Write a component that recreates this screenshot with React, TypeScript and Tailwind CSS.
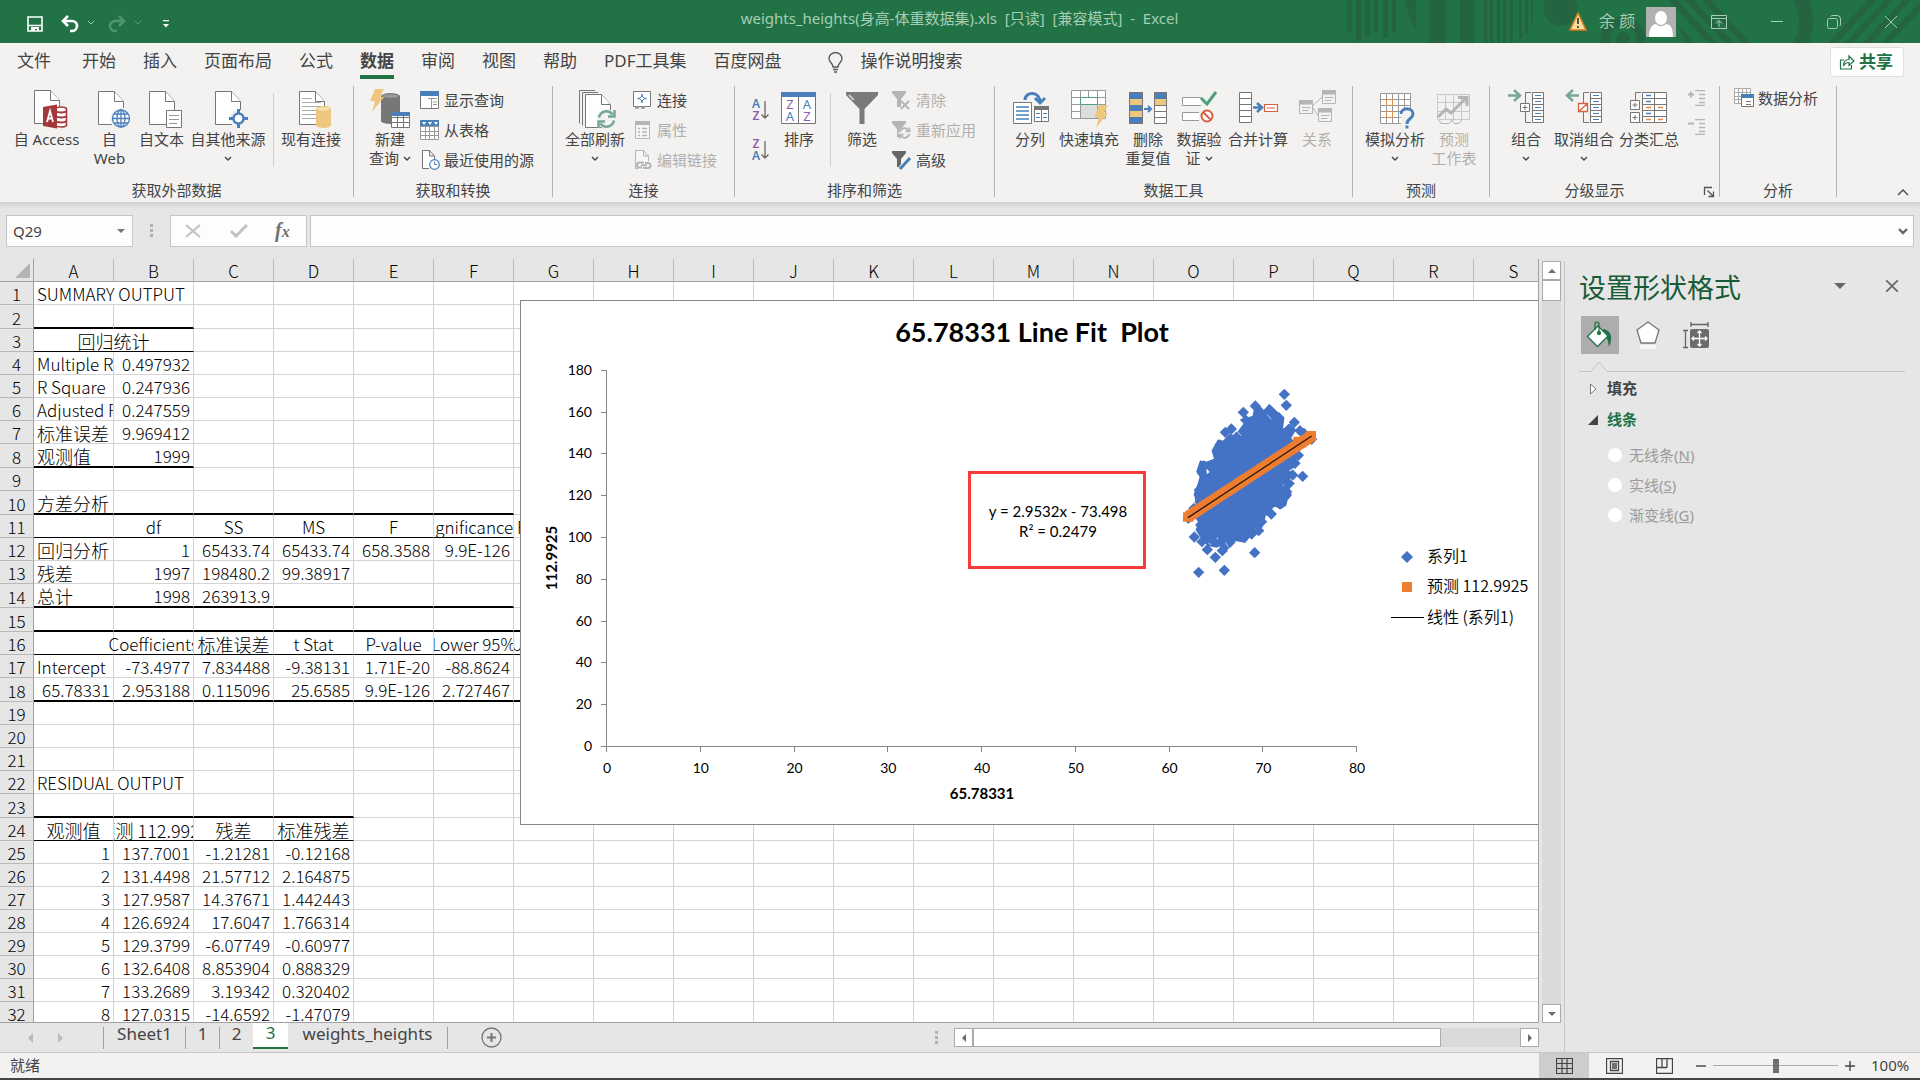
import React from "react";

const UI = "font-['Noto_Sans','Noto_Sans_CJK_SC',sans-serif]";
const GRAY = "#767676";
const BLUE = "#4a7fba";
const GOLD = "#edc77d";
const GREEN = "#77a897";
const RED = "#d9603f";
const PALE = "#b6b4b8";

type Kids = { children: React.ReactNode };

function Ico({ children }: Kids) {
  return (
    <svg className="h-10 w-10 shrink-0 overflow-visible" viewBox="0 0 40 40" fill="none" stroke={GRAY} aria-hidden="true">
      {children}
    </svg>
  );
}

function Small({ children }: Kids) {
  return (
    <svg className="h-5 w-5 shrink-0" viewBox="0 0 20 20" fill="none" stroke={GRAY} aria-hidden="true">
      {children}
    </svg>
  );
}

function Page({ x = 7.5, y = 2.5, h = 33 }: { x?: number; y?: number; h?: number }) {
  return (
    <g transform={`translate(${x} ${y})`}>
      <path d={`M0 0H16L25 10V${h}H0Z`} fill="#fff" />
      <path d="M16 0V10H25" fill="#fff" />
    </g>
  );
}

function Cells({ x, y, w, h, cols, rows, stroke = GRAY, fill = "#fff" }: { x: number; y: number; w: number; h: number; cols: number; rows: number; stroke?: string; fill?: string }) {
  let d = `M${x} ${y}h${w}v${h}h${-w}z`;
  for (let i = 1; i < cols; i++) d += `M${x + Math.round((w * i) / cols)} ${y}v${h}`;
  for (let i = 1; i < rows; i++) d += `M${x} ${y + Math.round((h * i) / rows)}h${w}`;
  return <path d={d} fill={fill} stroke={stroke} />;
}

function Drum({ x, y, w, h, fill, top }: { x: number; y: number; w: number; h: number; fill: string; top: string }) {
  return (
    <g stroke="none">
      <path d={`M${x} ${y + 3}v${h - 6}a${w / 2} 3 0 0 0 ${w} 0v${-(h - 6)}z`} fill={fill} />
      <ellipse cx={x + w / 2} cy={y + 3} rx={w / 2} ry="3" fill={fill} />
      <ellipse cx={x + w / 2} cy={y + 3} rx={w / 2 - 1.5} ry="1.8" fill={top} />
    </g>
  );
}

function Refresh({ cx, cy, r, color, w = 2.5 }: { cx: number; cy: number; r: number; color: string; w?: number }) {
  return (
    <g transform={`translate(${cx} ${cy}) scale(${r / 8})`} stroke={color} strokeWidth={(w * 8) / r}>
      <path d="M-7.5 -1.5A7.5 7.5 0 0 1 6 -4.5M8 -9V-2.5H1.5" />
      <path d="M7.5 1.5A7.5 7.5 0 0 1 -6 4.5M-8 9V2.5H-1.5" />
    </g>
  );
}

function Caret() {
  return (
    <svg className="inline-block h-2 w-2 shrink-0" viewBox="0 0 8 8" fill="none" stroke="#444" strokeWidth="1.4" aria-hidden="true">
      <path d="M1 2L4 5L7 2" />
    </svg>
  );
}

function Big({ w, icon, a, b, caret, off }: { w: string; icon: React.ReactNode; a: string; b?: string; caret?: boolean; off?: boolean }) {
  return (
    <button type="button" disabled={off} className={`flex shrink-0 flex-col items-center pt-[7px] text-[15px] leading-[19px] whitespace-nowrap ${w} ${off ? "text-[#b1afad]" : "text-[#444]"}`}>
      {icon}
      <span className="mt-px">{a}</span>
      <span className="flex h-[19px] items-center gap-1">
        {b}
        {caret && <Caret />}
      </span>
    </button>
  );
}

function Item({ icon, label, off }: { icon: React.ReactNode; label: string; off?: boolean }) {
  return (
    <button type="button" disabled={off} className={`flex h-[30px] items-center gap-1 text-[15px] whitespace-nowrap ${off ? "text-[#b1afad]" : "text-[#444]"}`}>
      {icon}
      {label}
    </button>
  );
}

function Group({ w, label, children, launcher }: { w: string; label: string; children: React.ReactNode; launcher?: boolean }) {
  return (
    <section aria-label={label} className={`flex shrink-0 ${w}`}>
      <div className="flex min-w-0 flex-1 flex-col">
        <div className="flex h-[98px]">{children}</div>
        <div className="flex h-5 items-center text-[15px] leading-5 text-[#444]">
          <span className="flex-1 text-center">{label}</span>
          {launcher && (
            <button type="button" aria-label="分级显示设置" className="mx-1 flex pt-1">
              <svg className="h-3 w-3" viewBox="0 0 12 12" fill="none" stroke="#555" strokeWidth="1.300">
                <path d="M1.500 9V1.500H9M4.500 4.500L10 10M10.500 5.500V10.500H5.500" />
              </svg>
            </button>
          )}
        </div>
      </div>
      <div className="mt-1 mb-[5px] w-px bg-[#b5b3b1]" />
    </section>
  );
}

const Thin = ({ m }: { m: string }) => <div className={`mt-[11px] mb-[13px] w-px shrink-0 bg-[#cfcdcb] ${m}`} />;

const Bolt = ({ x, y, s = 1 }: { x: number; y: number; s?: number }) => (
  <path transform={`translate(${x} ${y}) scale(${s})`} d="M5 0H14L10 8H14L2 23L5 12H0Z" fill={GOLD} stroke="none" />
);

const accessIcon = (
  <Ico>
    <Page y={1.5} />
    <path d="M28 19.500c3-2 10-2 11.500 0v17c-1.500 2-8.500 2-11.500 0z" fill="#fff" stroke="#a4373a" strokeWidth="1.500" />
    <path d="M28 22c3 2 10 2 11.500 0M28 27c3 2 10 2 11.500 0M28 32c3 2 10 2 11.500 0" stroke="#a4373a" strokeWidth="1.800" />
    <path d="M16 18L30 15.500V39.500L16 37Z" fill="#a4373a" stroke="none" />
    <path d="M20 33L23 22L26 33M21 29.500H25" stroke="#fff" strokeWidth="1.800" />
  </Ico>
);
const webIcon = (
  <Ico>
    <Page x={8.5} />
    <circle cx="31" cy="29.500" r="11" fill="#f3f2f1" stroke="none" />
    <g stroke={BLUE} strokeWidth="1.300">
      <circle cx="31" cy="29.500" r="8.500" fill="#fff" />
      <ellipse cx="31" cy="29.500" rx="4" ry="8.500" />
      <path d="M31 21V38M22.500 29.500H39.500M24 25H38M24 34H38" />
    </g>
  </Ico>
);
const textIcon = (
  <Ico>
    <Page />
    <path d="M24.500 21.500H39.500V38.500H24.500Z" fill="#fff" />
    <path d="M27 26.500H37M27 30.500H37M27 34.500H35" stroke="#999" />
  </Ico>
);
const otherIcon = (
  <Ico>
    <Page />
    <circle cx="30.500" cy="29.500" r="9" fill="#f3f2f1" stroke="none" />
    <circle cx="30.500" cy="29.500" r="5" fill="#fff" stroke={BLUE} strokeWidth="2.500" />
    <path d="M30.500 20V25M30.500 34V39M21 29.500H26M35 29.500H40" stroke={BLUE} strokeWidth="3" />
  </Ico>
);
const existingIcon = (
  <Ico>
    <Page x={8.5} />
    <path d="M11 9.500H21M11 13.500H30M11 17.500H30M11 21.500H25M11 25.500H25M11 29.500H25" stroke="#aaa" />
    <Drum x={25} y={17} w={15} h={22} fill={GOLD} top="#f6e0b3" />
  </Ico>
);
const newQueryIcon = (
  <Ico>
    <Drum x={11} y={4} w={19} h={31} fill="#777" top="#999" />
    <Bolt x={0} y={0} />
    <Cells x={21.5} y={23.5} w={18} h={15} cols={3} rows={3} />
    <path d="M21 23H40V27H21Z" fill={BLUE} stroke="none" />
  </Ico>
);
const refreshIcon = (
  <Ico>
    <path d="M4.500 34.500V1.500H20M7.500 36.500V3.500H23" />
    <Page x={10.5} y={5.5} h={33} />
    <circle cx="31.500" cy="30" r="10" fill="#f3f2f1" stroke="none" />
    <Refresh cx={31.5} cy={30} r={8} color={GREEN} />
  </Ico>
);
const sortIcon = (
  <Ico>
    <path d="M2.500 4.500H36.500V34.500H2.500ZM19.500 4V34" fill="#fff" />
    <path d="M2 3H37V8H2Z" fill={BLUE} stroke="none" />
    <g stroke="none" fontSize="13" textAnchor="middle" className="font-['Noto_Sans']">
      <text x="11" y="20" fill="#8f5bb0">Z</text>
      <text x="11" y="32" fill={BLUE}>A</text>
      <text x="28" y="20" fill={BLUE}>A</text>
      <text x="28" y="32" fill="#8f5bb0">Z</text>
    </g>
  </Ico>
);
const filterIcon = (
  <Ico>
    <path d="M4 3H36V6L22.500 20V35H17.500V20L4 6Z" fill="#7a7a7a" stroke="none" />
    <path d="M7 6L12 11" stroke="#ddd" strokeWidth="1.500" />
  </Ico>
);
const splitIcon = (
  <Ico>
    <path d="M3.500 13.500H21.500V34.500H3.500Z" fill="#fff" />
    <path d="M6 18H19M6 22H19M6 26H19M6 30H19" stroke={BLUE} strokeWidth="1.300" />
    <Cells x={24.5} y={17.5} w={14} h={15} cols={2} rows={1} />
    <path d="M24 17H39V21H24Z" fill={GRAY} stroke="none" />
    <path d="M26 24.500H30M33 24.500H37M26 28.500H30M33 28.500H37" stroke={BLUE} />
    <path d="M15 11C15 2 30 2 30 13M25 9L30 14L35 9" stroke={BLUE} strokeWidth="3" />
  </Ico>
);
const flashIcon = (
  <Ico>
    <Cells x={2.5} y={1.5} w={34} h={28} cols={4} rows={4} stroke="#999" />
    <path d="M12 16H28V29H12Z" fill="#ddd" stroke="none" />
    <path d="M11.500 8.500H28.500V15.500H11.500Z" fill="#fff" stroke="#4f9f7c" />
    <Bolt x={25} y={16} />
  </Ico>
);
const dupIcon = (
  <Ico>
    <path d="M1 3H15V35H1Z" fill={BLUE} stroke="none" />
    <path d="M1 10H15V16H1ZM1 22H15V28H1ZM26 10H39V16H26Z" fill={GOLD} stroke="none" />
    <path d="M26 3H39V10H26Z" fill={BLUE} stroke="none" />
    <path d="M26 17H39V35H26Z" fill="#fff" stroke="none" />
    <path d="M1.500 3.500H14.500V34.500H1.500ZM26.500 3.500H38.500V34.500H26.500ZM26 16.500H39M26 22.500H39M26 28.500H39" />
    <path d="M16 20H23M20 17L23 20L20 23" stroke={BLUE} strokeWidth="2" />
  </Ico>
);
const validIcon = (
  <Ico>
    <path d="M22 8.500H3.500V16.500H22M20 23.500H3.500V31.500H20" fill="#fff" stroke="#999" />
    <path d="M22 9L28 15L37 3" stroke="#4f9f7c" strokeWidth="3" />
    <circle cx="28" cy="27" r="5.500" stroke={RED} strokeWidth="2" fill="#fff" />
    <path d="M24 23L32 31" stroke={RED} strokeWidth="2" />
  </Ico>
);
const mergeIcon = (
  <Ico>
    <Cells x={1.5} y={3.5} w={12} h={30} cols={1} rows={5} />
    <path d="M15 18.500H23M19 14L24 18.500L19 23" stroke={BLUE} strokeWidth="2.500" />
    <path d="M26.500 15.500H39.500V22.500H26.500ZM29 19H37" stroke={RED} fill="#fff" strokeWidth="1.200" />
  </Ico>
);
const relIcon = (
  <Ico>
    <path d="M15 17.500L25 8M15 17.500L22 28" stroke={PALE} />
    {[[25.5, 1.5], [2.5, 11.5], [21.5, 19.5]].map(([x, y]) => (
      <g key={x} transform={`translate(${x} ${y})`} stroke={PALE}>
        <path d="M0 0H13V13H0Z" fill="#f3f2f1" />
        <path d="M0 0H13V3.500H0Z" fill={PALE} />
        <path d="M2.500 7H11M2.500 10H9" />
      </g>
    ))}
  </Ico>
);
const whatIfIcon = (
  <Ico>
    <Cells x={5.5} y={4.5} w={30} h={30} cols={5} rows={5} stroke="#999" />
    <path d="M11.500 10.500H17.500V16.500H11.500ZM11.500 22.500H17.500V28.500H11.500Z" fill="#fff" stroke="#e08a45" />
    <path d="M26 20H40V40H26Z" fill="#f3f2f1" stroke="none" />
    <path d="M26 25C26 18 38 18 38 25C38 30 32 29 32 35" stroke={BLUE} strokeWidth="3" />
    <path d="M30.500 36.500H33.500V39.500H30.500Z" fill={BLUE} stroke="none" />
  </Ico>
);
const forecastIcon = (
  <Ico>
    <Cells x={3.5} y={5.5} w={32} h={25} cols={4} rows={3} stroke="#c9c7ca" fill="#f3f2f1" />
    <path d="M5 31L7 34.500H15L18 31M18 31L20 34.500H25L28 31" stroke={PALE} />
    <path d="M4 28L12 20L17 24L32 9M24 8.500H33V17" stroke={PALE} strokeWidth="3" />
  </Ico>
);
const groupIcon = (
  <Ico>
    <path d="M2 6.500H13M8 1L14 6.500L8 12" stroke={GREEN} strokeWidth="2.500" />
    <path d="M25 3.500H19.500V14M19.500 23V33.500H25" />
    <Cells x={26.5} y={3.5} w={11} h={30} cols={1} rows={5} />
    <path d="M29 6.500H35M29 12.500H35M29 18.500H35M29 24.500H35M29 30.500H35" stroke={BLUE} />
    <path d="M14.500 14.500H23.500V22.500H14.500ZM16.500 18.500H21.500M19 16V21" fill="#fff" />
  </Ico>
);
const ungroupIcon = (
  <Ico>
    <path d="M15 6.500H4M9 1L3 6.500L9 12" stroke={GREEN} strokeWidth="2.500" />
    <path d="M25 3.500H19.500V14M19.500 23V33.500H25" />
    <Cells x={26.5} y={3.5} w={11} h={30} cols={1} rows={5} />
    <path d="M29 6.500H35M29 12.500H35M29 18.500H35M29 24.500H35M29 30.500H35" stroke={BLUE} />
    <path d="M14.500 14.500H23.500V22.500H14.500ZM15 22L23 15" fill="#fff" stroke={RED} strokeWidth="1.300" />
  </Ico>
);
const subtotalIcon = (
  <Ico>
    <path d="M12 3.500H6.500V11M12 33.500H6.500" />
    <Cells x={13.5} y={3.5} w={24} h={30} cols={2} rows={5} />
    <path d="M17 6.500H22M17 12.500H22M17 24.500H22" stroke={BLUE} strokeWidth="1.300" />
    <path d="M17 18.500H22M29 18.500H34M17 30.500H22M29 30.500H34" stroke="#e08a45" strokeWidth="1.300" />
    <path d="M1.500 11.500H10.500V20.500H1.500ZM3.500 16H8.500M6 13.500V18.500M1.500 23.500H10.500V33.500H1.500ZM3.500 28.500H8.500M6 26V31" fill="#fff" />
  </Ico>
);

const showQuery = (
  <Small>
    <path d="M.5 2.500H18.500V18.500H.5Z" fill="#fff" />
    <path d="M0 1H19V6H0Z" fill={BLUE} stroke="none" />
    <path d="M11.500 9V18M8 8.500H17M13 12H17M13 14.500H17" stroke="#999" />
  </Small>
);
const fromTable = (
  <Small>
    <Cells x={0.5} y={2.5} w={18} h={17} cols={4} rows={4} stroke="#999" />
    <path d="M0 0H19V6H0Z" fill={BLUE} stroke="none" />
    <path d="M2 2H6L4 5ZM8 2H12L10 5ZM14 2H18L16 5Z" fill="#fff" stroke="none" />
  </Small>
);
const recent = (
  <Small>
    <path d="M9 18.500H2.500V.5H9.500L14.500 6V9M9.500 .5V6H14.500" fill="#fff" />
    <circle cx="14.500" cy="14.500" r="4.800" fill="#fff" stroke={BLUE} strokeWidth="1.200" />
    <path d="M14.500 11.500V14.500H17" stroke={BLUE} />
  </Small>
);
const connIcon = (
  <Small>
    <path d="M.5 1.500H17.500V16.500H.5Z" fill="#fff" />
    <path d="M9 4V13M4.500 8.500H13.500" stroke={BLUE} strokeWidth="1.500" />
    <path d="M9 6L11.500 8.500L9 11L6.500 8.500Z" fill="#fff" stroke={BLUE} />
    <path d="M2 17.500H6M8 17.500H12" strokeWidth="2.500" stroke="#999" />
  </Small>
);
const propIcon = (
  <Small>
    <path d="M2.500 2.500H16.500V18.500H2.500Z" stroke={PALE} fill="#f7f6f8" />
    <path d="M2 1H17V5H2Z" fill={PALE} stroke="none" />
    <path d="M5 8.500H7M9 8.500H14M5 12H7M9 12H14M5 15.500H7M9 15.500H14" stroke={PALE} strokeWidth="1.300" />
  </Small>
);
const linkIcon = (
  <Small>
    <path d="M5 18.500H2.500V.5H10.500L15.500 6V11M10.500 .5V6H15.500" stroke={PALE} fill="#f7f6f8" />
    <path d="M9 17.500H6.500A2.500 2.500 0 0 1 6.500 12.500H11M12 13H15A2.500 2.500 0 0 1 15 18H10M8 15.300H14" stroke={PALE} strokeWidth="2" />
  </Small>
);
const smallFunnel = (c: string) => <path d="M0 1H14V3L9 9V17H5V9L0 3Z" fill={c} stroke="none" />;
const clearIcon = (
  <Small>
    {smallFunnel(PALE)}
    <path d="M9 11L17 19M17 11L9 19" stroke={PALE} strokeWidth="2" />
  </Small>
);
const reapplyIcon = (
  <Small>
    {smallFunnel(PALE)}
    <circle cx="12.500" cy="13" r="6" fill="#f3f2f1" stroke="none" />
    <Refresh cx={12.5} cy={13} r={5} color={PALE} w={1.8} />
  </Small>
);
const advIcon = (
  <Small>
    {smallFunnel("#666")}
    <path d="M18 8L9 18" stroke="#f3f2f1" strokeWidth="5" />
    <path d="M18 8L8 19" stroke={BLUE} strokeWidth="3" />
  </Small>
);
const analysisIcon = (
  <Small>
    <Cells x={0.5} y={0.5} w={16} h={15} cols={4} rows={4} stroke="#aaa" />
    <path d="M7.500 6.500H19.500V18.500H7.500Z" fill="#fff" />
    <path d="M7 6H20V10H7Z" fill={BLUE} stroke="none" />
    <path d="M12 13.500H17M12 16.500H17" />
  </Small>
);

function AzIcon({ top, bottom, ct, cb }: { top: string; bottom: string; ct: string; cb: string }) {
  return (
    <svg className="h-[22px] w-5 overflow-visible" viewBox="0 0 20 22" aria-hidden="true">
      <g fontSize="12" fontWeight="600" textAnchor="middle" className="font-['Noto_Sans']">
        <text x="5" y="9" fill={ct}>{top}</text>
        <text x="5" y="21" fill={cb}>{bottom}</text>
      </g>
      <path d="M14 2V19M10.500 15.500L14 19L17.500 15.500" fill="none" stroke="#666" strokeWidth="1.300" />
    </svg>
  );
}

function OutlineIcon({ plus }: { plus?: boolean }) {
  return (
    <svg className="h-4 w-5" viewBox="0 0 20 16" fill="none" stroke={PALE} aria-hidden="true">
      <path d="M8 .5H18M12 4.500H18M12 8.500H18M12 12.500H18M8 15.500H18" strokeWidth="1.300" />
      <path d={plus ? "M1 4.500H7M4 1.500V7.500" : "M1 4.500H7"} strokeWidth="2" />
    </svg>
  );
}

function TitleBar() {
  return (
    <header className="relative flex h-[43px] shrink-0 items-center bg-[#217346] text-[#a6cdb5]">
      <svg className="absolute top-0 right-0 h-[43px] w-[580px]" viewBox="0 0 580 43" aria-hidden="true">
        <g fill="#256440">
          <path d="M7 0h5v32h-5zM16 0h5v41h-5zM25 0h5v36h-5zM34 0h4v32h-4zM43 0h5v38h-5zM52 0h4v32h-4zM65 0h11v30q-8-12-11-30zM89 0h17v43h-17zM120 0h14v43h-14z" />
          <path d="M144 0h3v43h-3zM150 0h3v43h-3zM157 0h3v43h-3zM163 0h3v43h-3zM170 0h3v43h-3zM179 0h3v39h-3zM185 0h3v34h-3zM191 0h2v23h-2z" />
          <path d="M206 0h29a17 17 0 1 1-29 0z" />
          <path d="M453 0h16q8 22 0 43h-16q12-22 0-43zM488 43L528 0h9L497 43zM505 43L545 0h8L513 43zM523 43L563 0h8L531 43zM541 43L580 2V11L549 43zM328 0h9l40 43h-9zM345 0h9l40 43h-9zM362 0h9l40 43h-9zM337 24l18 19h-9z" />
        </g>
        <circle cx="283" cy="39" r="18" fill="none" stroke="#256440" strokeWidth="9" />
        <circle cx="283" cy="39" r="7" fill="#256440" />
      </svg>
      <div className="flex w-[200px] items-center pl-[27px]">
        <button type="button" aria-label="保存" className="mt-1">
          <svg className="h-4 w-4" viewBox="0 0 16 16" fill="none" stroke="#fff" strokeWidth="1.600">
            <path d="M1 1H15V15H1ZM1 9.500H15" />
            <path d="M4 11H12V15H10V13H8V15H4Z" fill="#fff" stroke="none" />
          </svg>
        </button>
        <button type="button" aria-label="撤消" className="mt-1 ml-[18px] flex items-center gap-2">
          <svg className="h-[18px] w-[18px]" viewBox="0 0 18 18" fill="none" stroke="#fff" strokeWidth="2.600">
            <path d="M7 1L2 6L7 11M2.500 6H11A5 5 0 0 1 11 16H9" />
          </svg>
          <svg className="h-2 w-2" viewBox="0 0 8 8" fill="none" stroke="#a6cdb5"><path d="M1 1L4 4L7 1" /></svg>
        </button>
        <button type="button" aria-label="恢复" className="mt-1 ml-[13px] flex items-center gap-2">
          <svg className="h-[18px] w-[18px]" viewBox="0 0 18 18" fill="none" stroke="#4f9470" strokeWidth="2.600">
            <path d="M11 1L16 6L11 11M15.500 6H7A5 5 0 0 0 7 16H9" />
          </svg>
          <svg className="h-2 w-2" viewBox="0 0 8 8" fill="none" stroke="#5f9f7d"><path d="M1 1L4 4L7 1" /></svg>
        </button>
        <button type="button" aria-label="自定义快速访问工具栏" className="mt-1 ml-5">
          <svg className="h-2 w-2" viewBox="0 0 8 8"><path d="M1 0H7V1.200H1ZM1 4H7L4 7.500Z" fill="#fff" /></svg>
        </button>
      </div>
      <h1 className="flex-1 pb-[6px] pl-[150px] text-center text-[15px] whitespace-pre">weights_heights(身高-体重数据集).xls  [只读]  [兼容模式]  -  Excel</h1>
      <div className="relative flex w-[351px] items-center">
        <svg className="h-[19px] w-[18px]" viewBox="0 0 18 19"><path d="M9 1L17 18H1Z" fill="#f7dc9b" stroke="#d97a1e" strokeWidth="1.500" /><path d="M9 6V12M9 14V16" stroke="#444" strokeWidth="1.800" /></svg>
        <span className="ml-3 w-[47px] pb-px text-[16px] leading-5 whitespace-nowrap">余 颜</span>
        <svg className="h-[30px] w-[30px] bg-[#b1b1b1]" viewBox="0 0 30 30"><ellipse cx="15" cy="11" rx="6" ry="7" fill="#fff" /><path d="M3 30C3 20 7 17 10 17C13 20 17 20 20 17C24 17 27 20 27 30Z" fill="#fff" /></svg>
        <button type="button" aria-label="功能区显示选项" className="ml-[35px]">
          <svg className="h-4 w-4" viewBox="0 0 16 16" fill="none" stroke="currentColor"><path d="M.5 1.500H15.500V14.500H.5ZM.5 4.500H15.500M8 13V6.500M5 9.500L8 6.500L11 9.500" /></svg>
        </button>
        <button type="button" aria-label="最小化" className="ml-11">
          <svg className="h-4 w-3" viewBox="0 0 12 16" stroke="currentColor"><path d="M0 7.500H12" /></svg>
        </button>
        <button type="button" aria-label="向下还原" className="ml-11">
          <svg className="h-[14px] w-[14px]" viewBox="0 0 14 14" fill="none" stroke="currentColor"><rect x=".5" y="3.500" width="10" height="10" rx="2" /><path d="M3.500 1.500Q4 .5 6 .5H10Q13.500 .5 13.500 4V9Q13.500 10.500 12.500 11" /></svg>
        </button>
        <button type="button" aria-label="关闭" className="ml-11">
          <svg className="h-3 w-3" viewBox="0 0 12 12" stroke="currentColor"><path d="M0 0L12 12M12 0L0 12" /></svg>
        </button>
      </div>
    </header>
  );
}

const tabs = ["开始", "插入", "页面布局", "公式", "数据", "审阅", "视图", "帮助", "PDF工具集", "百度网盘"];

function TabRow() {
  return (
    <nav className="flex h-[39px] shrink-0 items-start text-[17px] text-[#444]">
      <button type="button" className="mr-[31px] ml-[17px] h-9 leading-9">文件</button>
      <div className="flex gap-[27px]">
        {tabs.map((t) => (
          <button key={t} type="button" className={`h-9 leading-9 whitespace-nowrap ${t === "数据" ? "border-b-4 border-[#217346] font-bold" : ""}`}>{t}</button>
        ))}
      </div>
      <svg className="mt-[9px] ml-[46px] h-[21px] w-[15px]" viewBox="0 0 15 21" fill="none" stroke="#555" strokeWidth="1.300">
        <path d="M5 15C5 11 1 10.500 1 6.500A6.500 6 0 0 1 14 6.500C14 10.500 10 11 10 15ZM5 17.500H10M6 20H9" />
      </svg>
      <button type="button" className="ml-[18px] h-9 leading-9">操作说明搜索</button>
      <button type="button" className="mt-1 mr-4 ml-auto flex h-[30px] items-center gap-1 rounded-[3px] border border-[#e1dfdd] bg-white pr-[10px] pl-2 text-[17px] font-bold text-[#217346]">
        <svg className="h-4 w-4" viewBox="0 0 16 16" fill="none" stroke="#217346" strokeWidth="1.200"><path d="M5 6H1.500V15H12.500V11M4.500 12C4.500 7 7 5.500 10 5.500V2L15 7L10 11.500V8.500C8 8.500 6 9 4.500 12Z" /></svg>
        共享
      </button>
    </nav>
  );
}

function Ribbon() {
  return (
    <div className="relative flex h-[120px] shrink-0">
      <Group w="w-[354px]" label="获取外部数据">
        <div className="w-[7px]" />
        <Big w="w-[79px]" icon={accessIcon} a="自 Access" />
        <Big w="w-[47px]" icon={webIcon} a="自" b="Web" />
        <Big w="w-[57px]" icon={textIcon} a="自文本" />
        <Big w="w-[76px]" icon={otherIcon} a="自其他来源" caret />
        <Thin m="mr-[3px] ml-[7px]" />
        <Big w="w-[68px]" icon={existingIcon} a="现有连接" />
      </Group>
      <Group w="w-[199px]" label="获取和转换">
        <Big w="ml-[6px] w-[60px]" icon={newQueryIcon} a="新建" b="查询" caret />
        <div className="pt-[3px]">
          <Item icon={showQuery} label="显示查询" />
          <Item icon={fromTable} label="从表格" />
          <Item icon={recent} label="最近使用的源" />
        </div>
      </Group>
      <Group w="w-[182px]" label="连接">
        <Big w="ml-3 w-[60px]" icon={refreshIcon} a="全部刷新" caret />
        <div className="ml-2 pt-[3px]">
          <Item icon={connIcon} label="连接" />
          <Item icon={propIcon} label="属性" off />
          <Item icon={linkIcon} label="编辑链接" off />
        </div>
      </Group>
      <Group w="w-[260px]" label="排序和筛选">
        <div className="ml-4 flex flex-col gap-[18px] pt-[17px]">
          <button type="button" aria-label="升序"><AzIcon top="A" bottom="Z" ct={BLUE} cb="#8f5bb0" /></button>
          <button type="button" aria-label="降序"><AzIcon top="Z" bottom="A" ct="#8f5bb0" cb={BLUE} /></button>
        </div>
        <Big w="ml-2 w-10" icon={sortIcon} a="排序" />
        <Thin m="mx-[11px]" />
        <Big w="w-10" icon={filterIcon} a="筛选" />
        <div className="ml-[10px] pt-[3px]">
          <Item icon={clearIcon} label="清除" off />
          <Item icon={reapplyIcon} label="重新应用" off />
          <Item icon={advIcon} label="高级" />
        </div>
      </Group>
      <Group w="w-[358px]" label="数据工具">
        <Big w="ml-[15px] w-10" icon={splitIcon} a="分列" />
        <Big w="ml-[7px] w-16" icon={flashIcon} a="快速填充" />
        <Big w="ml-[3px] w-12" icon={dupIcon} a="删除" b="重复值" />
        <Big w="ml-[3px] w-12" icon={validIcon} a="数据验" b="证" caret />
        <Big w="ml-1 w-[62px]" icon={mergeIcon} a="合并计算" />
        <Big w="ml-2 w-10" icon={relIcon} a="关系" off />
      </Group>
      <Group w="w-[137px]" label="预测">
        <Big w="ml-[11px] w-[62px]" icon={whatIfIcon} a="模拟分析" caret />
        <Big w="ml-[5px] w-[46px]" icon={forecastIcon} a="预测" b="工作表" off />
      </Group>
      <Group w="w-[230px]" label="分级显示" launcher>
        <Big w="ml-4 w-10" icon={groupIcon} a="组合" caret />
        <Big w="ml-[7px] w-[62px]" icon={ungroupIcon} a="取消组合" caret />
        <Big w="ml-[3px] w-[62px]" icon={subtotalIcon} a="分类汇总" />
        <div className="ml-[7px] flex flex-col gap-[13px] pt-2">
          <button type="button" aria-label="显示明细数据" disabled><OutlineIcon plus /></button>
          <button type="button" aria-label="隐藏明细数据" disabled><OutlineIcon /></button>
        </div>
      </Group>
      <Group w="w-[117px]" label="分析">
        <div className="pt-px pl-[14px]">
          <Item icon={analysisIcon} label="数据分析" />
        </div>
      </Group>
      <button type="button" aria-label="折叠功能区" className="mt-auto mr-[11px] mb-1 ml-auto">
        <svg className="h-3 w-3" viewBox="0 0 12 12" fill="none" stroke="#444" strokeWidth="1.300"><path d="M1 9L6 4L11 9" /></svg>
      </button>
    </div>
  );
}

function Dots() {
  return (
    <svg className="h-[14px] w-[3px]" viewBox="0 0 3 14" fill="#b0b0b0" aria-hidden="true"><path d="M0 0h3v3H0zM0 5h3v3H0zM0 10h3v3H0z" /></svg>
  );
}

function FormulaBar() {
  return (
    <div className="flex h-[57px] shrink-0 items-start bg-linear-to-b from-[#cfcfcf] to-[#e6e6e6] to-12% pt-[13px] pr-[6px] pl-[6px]">
      <div className="flex h-8 w-[127px] items-center border border-[#c6c6c6] bg-[#fdfdfd]">
        <input aria-label="名称框" defaultValue="Q29" className="w-0 flex-1 bg-transparent pl-[6px] text-[15px] text-[#444] outline-none" />
        <button type="button" aria-label="名称列表" className="px-[7px]">
          <svg className="h-1 w-2" viewBox="0 0 8 4"><path d="M0 0H8L4 4Z" fill="#777" /></svg>
        </button>
      </div>
      <div className="mt-[9px] w-[37px] pl-[17px]"><Dots /></div>
      <div className="flex h-8 w-[137px] items-center border border-[#c6c6c6] bg-[#fdfdfd] pl-[14px]">
        <button type="button" aria-label="取消"><svg className="h-[14px] w-4" viewBox="0 0 16 14" stroke="#c3c3c3" strokeWidth="2.200"><path d="M1 1L15 13M15 1L1 13" /></svg></button>
        <button type="button" aria-label="输入" className="ml-[29px]"><svg className="h-[14px] w-[18px]" viewBox="0 0 18 14" fill="none" stroke="#c3c3c3" strokeWidth="3"><path d="M1 7L6 12L17 1" /></svg></button>
        <button type="button" aria-label="插入函数" className="ml-[27px] font-['Liberation_Serif',serif] text-[20px] leading-6 font-bold text-[#707070] italic">f<span className="text-[16px]">x</span></button>
      </div>
      <div className="ml-[3px] flex h-8 flex-1 items-center border border-[#c6c6c6] bg-[#fdfdfd]">
        <input aria-label="编辑栏" className="h-full flex-1 bg-transparent px-2 outline-none" />
        <button type="button" aria-label="展开编辑栏" className="px-[5px]"><svg className="h-2 w-[10px]" viewBox="0 0 10 8" fill="none" stroke="#666" strokeWidth="2.400"><path d="M1 2L5 6L9 2" /></svg></button>
      </div>
    </div>
  );
}

const letters = "ABCDEFGHIJKLMNOPQRS".split("");

const data: Record<number, string[]> = {
  1: ["SUMMARY OUTPUT"],
  3: ["回归统计"],
  4: ["Multiple R", "0.497932"],
  5: ["R Square", "0.247936"],
  6: ["Adjusted R Square", "0.247559"],
  7: ["标准误差", "9.969412"],
  8: ["观测值", "1999"],
  10: ["方差分析"],
  11: ["", "df", "SS", "MS", "F", "Significance F"],
  12: ["回归分析", "1", "65433.74", "65433.74", "658.3588", "9.9E-126"],
  13: ["残差", "1997", "198480.2", "99.38917"],
  14: ["总计", "1998", "263913.9"],
  16: ["", "Coefficients", "标准误差", "t Stat", "P-value", "Lower 95%", "Upper 95%"],
  17: ["Intercept", "-73.4977", "7.834488", "-9.38131", "1.71E-20", "-88.8624"],
  18: ["65.78331", "2.953188", "0.115096", "25.6585", "9.9E-126", "2.727467"],
  22: ["RESIDUAL OUTPUT"],
  24: ["观测值", "预测 112.9925", "残差", "标准残差"],
  25: ["1", "137.7001", "-1.21281", "-0.12168"],
  26: ["2", "131.4498", "21.57712", "2.164875"],
  27: ["3", "127.9587", "14.37671", "1.442443"],
  28: ["4", "126.6924", "17.6047", "1.766314"],
  29: ["5", "129.3799", "-6.07749", "-0.60977"],
  30: ["6", "132.6408", "8.853904", "0.888329"],
  31: ["7", "133.2689", "3.19342", "0.320402"],
  32: ["8", "127.0315", "-14.6592", "-1.47079"],
};

const thick: Record<number, number> = { 2: 2, 8: 2, 10: 6, 14: 6, 15: 7, 18: 7, 23: 4 };
const fine: Record<number, number> = { 3: 2, 11: 6, 16: 7, 24: 4 };
const centered = [3, 11, 16, 24];

function Sheet() {
  return (
    <div className="relative min-w-0 flex-1 overflow-hidden border-r border-b border-[#a0a0a0] bg-white">
      <table className="w-[1554px] table-fixed border-separate border-spacing-0 font-['Noto_Sans_CJK_SC',sans-serif] text-[17px] leading-5 font-light text-black">
        <thead>
          <tr className="h-[23px] bg-[#e6e6e6]">
            <th className="w-[34px] border-r border-b border-[#a0a0a0] p-0">
              <svg className="ml-[15px] h-[15px] w-[15px]" viewBox="0 0 15 15" aria-hidden="true"><path d="M15 0V15H0Z" fill="#b3b3b3" /></svg>
            </th>
            {letters.map((l) => (
              <th key={l} className="w-20 border-r border-b border-[#a0a0a0] border-r-[#bcbcbc] p-0 pt-[2px] font-light">{l}</th>
            ))}
          </tr>
        </thead>
        <tbody>
          {Array.from({ length: 32 }, (_, i) => i + 1).map((r) => {
            const row = data[r] ?? [];
            const wide = r === 1 || r === 3 || r === 22;
            const bigRow = r in thick;
            return (
              <tr key={r} className={bigRow ? "h-6" : "h-[23px]"}>
                <th className="border-r border-b border-r-[#a0a0a0] border-b-[#b8b8b8] bg-[#e6e6e6] p-0 pt-[2px] font-light">{r}</th>
                {letters.map((l, c) => {
                  if (wide && c === 1) return null;
                  const v = row[c] ?? "";
                  const line = bigRow && c < thick[r] ? "border-b-2 border-b-black" : r in fine && c < fine[r] ? "border-b border-b-black" : "border-b border-b-[#d4d4d4]";
                  const numeric = /^-?[\d.]+(E-\d+)?$/.test(v);
                  const align = centered.includes(r) ? "justify-center" : numeric ? "justify-end" : "justify-start";
                  const size = /[一-龥]/.test(v) ? "text-[18px] leading-5" : "";
                  const clip = v === "Significance F" ? "[clip-path:inset(0_-80px_0_0)]" : v === "Coefficients" ? "[clip-path:inset(0_0_0_-80px)]" : "overflow-hidden";
                  const side = r === 11 || r === 16 || v.startsWith("预测") ? "" : "px-[3px]";
                  return (
                    <td key={l} colSpan={wide && c === 0 ? 2 : 1} className={`border-r border-r-[#d4d4d4] p-0 ${line}`}>
                      {v && <div className={`flex h-[22px] pt-[2px] whitespace-nowrap ${side} ${align} ${size} ${clip}`}><span className="shrink-0">{v}</span></div>}
                    </td>
                  );
                })}
              </tr>
            );
          })}
        </tbody>
      </table>
      <div className="absolute top-[41px] left-[520px] border border-[#868686] bg-white"><Chart /></div>
    </div>
  );
}

const outline = "42,395 52,380 45,340 55,315 62,290 52,275 62,245 80,248 105,238 98,212 115,182 130,185 150,165 165,170 195,130 185,120 220,110 225,88 250,100 268,76 285,92 310,115 306,145 318,155 330,135 345,150 330,175 345,190 345,240 350,255 325,270 335,285 325,300 340,310 326,325 332,345 320,360 316,375 300,385 285,375 262,395 255,405 245,440 225,440 215,460 195,485 165,480 150,495 130,490 110,500 85,495 70,480 50,450 60,430 50,415";
const strays: [number, number][] = [
  [313, 43], [319, 76], [226, 78], [190, 97], [198, 121], [268, 90], [343, 127], [360, 152], [372, 160], [395, 178], [154, 147], [136, 157], [326, 148], [297, 113],
  [120, 195], [112, 214], [72, 258], [82, 262], [67, 278], [58, 330], [57, 345], [355, 226], [345, 250], [338, 285], [368, 289], [326, 310], [320, 335], [314, 350], [303, 371],
  [274, 402], [262, 392], [236, 452], [245, 425], [224, 518], [133, 571], [56, 577], [106, 532], [82, 509], [127, 512], [135, 500], [43, 471], [66, 485], [25, 415], [64, 448], [62, 435], [192, 472], [150, 487], [215, 462], [42, 385], [171, 170], [240, 95], [60, 365],
];

function Chart() {
  const px = (v: number) => 85 + v * 9.375;
  const py = (v: number) => Math.round(445 - v * 2.09);
  return (
    <svg className="block h-[523px] w-[1030px] font-['Lato','Noto_Sans_CJK_SC',sans-serif]" viewBox="0 0 1030 523" role="img" aria-label="65.78331 Line Fit Plot" fill="#000">
      <text x="511" y="41" textAnchor="middle" fontSize="27" fontWeight="700" xmlSpace="preserve">65.78331 Line Fit&#160; Plot</text>
      <path d="M85.500 69V445.500H835" fill="none" stroke="#868686" />
      {[0, 20, 40, 60, 80, 100, 120, 140, 160, 180].map((v) => (
        <g key={v}>
          <path d={`M80 ${py(v) + 0.5}H85`} stroke="#868686" />
          <text x="71" y={py(v) + 5} textAnchor="end" fontSize="14">{v}</text>
        </g>
      ))}
      {[0, 10, 20, 30, 40, 50, 60, 70, 80].map((v) => (
        <g key={v}>
          <path d={`M${Math.round(px(v)) + 0.5} 445V451`} stroke="#868686" />
          <text x={px(v) + 1} y="472" textAnchor="middle" fontSize="14">{v}</text>
        </g>
      ))}
      <text x="461" y="498" textAnchor="middle" fontSize="15" fontWeight="700">65.78331</text>
      <text transform="translate(36 257) rotate(-90)" textAnchor="middle" fontSize="15" fontWeight="700">112.9925</text>
      <g transform="translate(659 79) scale(0.3333)">
        <polygon points={outline} fill="#4472c4" stroke="#4472c4" strokeWidth="6" />
        {strays.map(([x, y], i) => (
          <path key={i} d={`M${x} ${y - 17}l17 17l-17 17l-17 -17z`} fill="#4472c4" />
        ))}
        <path d="M80 268l8 8l-6 5zM262 104l12 14M308 315l4 2M112 472v6M86 490l8 4M168 150l16 18M136 488l10 14" fill="#fff" stroke="#fff" strokeWidth="2" />
        <path d="M24 410L395 168" stroke="#ed7d31" strokeWidth="36" />
        <path d="M9 397h31v28H9zM340 170h40v32h-40zM377 153h31v30h-31z" fill="#ed7d31" />
        <path d="M24 413L395 168" stroke="#2b1608" strokeWidth="4" />
      </g>
      <rect x="448.500" y="171.500" width="175" height="95" fill="none" stroke="#fb3a3c" strokeWidth="3" />
      <text x="537" y="216" textAnchor="middle" fontSize="15">y = 2.9532x - 73.498</text>
      <text x="537" y="236" textAnchor="middle" fontSize="15">R² = 0.2479</text>
      <path d="M886 250l6 6l-6 6l-6 -6z" fill="#4472c4" />
      <path d="M881 281h10v10h-10z" fill="#ed7d31" />
      <path d="M870 316.500h33" stroke="#000" />
      <g fontSize="16" className="font-['Noto_Sans_CJK_SC',sans-serif] font-[350]">
        <text x="906" y="261">系列1</text>
        <text x="906" y="291">预测 112.9925</text>
        <text x="906" y="322">线性 (系列1)</text>
      </g>
    </svg>
  );
}

function Arrow({ d }: { d: string }) {
  return <svg className="h-[10px] w-[10px]" viewBox="0 0 10 10" aria-hidden="true"><path d={d} fill="#6b6b6b" /></svg>;
}

const box = "flex shrink-0 items-center justify-center border border-[#ababab] bg-white";

function VScroll() {
  return (
    <div className="mt-[2px] ml-[3px] flex w-[19px] shrink-0 flex-col bg-[#dadada]">
      <button type="button" aria-label="向上滚动" className={`${box} h-[19px]`}><Arrow d="M1 7H9L5 3Z" /></button>
      <div className={`${box} h-[21px]`} />
      <div className="flex-1" />
      <button type="button" aria-label="向下滚动" className={`${box} h-[19px]`}><Arrow d="M1 3H9L5 7Z" /></button>
    </div>
  );
}

function SheetTabs() {
  const t = "mt-1 h-[22px] border-r border-[#a0a0a0] pb-2 leading-[14px]";
  return (
    <div className="flex h-[29px] shrink-0 items-start text-[17px] text-[#444]">
      <div className="flex w-[103px] gap-[19px] pt-[10px] pl-[26px]">
        <svg className="h-[10px] w-[10px]" viewBox="0 0 10 10"><path d="M7 0V10L2 5Z" fill="#bbb" /></svg>
        <svg className="h-[10px] w-[10px]" viewBox="0 0 10 10"><path d="M3 0V10L8 5Z" fill="#bbb" /></svg>
      </div>
      <button type="button" className={`${t} w-[83px] border-l`}>Sheet1</button>
      <button type="button" className={`${t} w-[34px]`}>1</button>
      <button type="button" className="mt-1 h-[22px] w-[33px] pb-2 leading-[14px]">2</button>
      <button type="button" aria-current="true" className="h-[26px] w-[35px] border-b-2 border-[#217346] bg-white pb-1 leading-[14px] text-[#217346]">3</button>
      <button type="button" className={`${t} w-[160px] text-center`}>weights_heights</button>
      <button type="button" aria-label="新工作表" className="mt-1 ml-[33px]">
        <svg className="h-[21px] w-[21px]" viewBox="0 0 21 21" fill="none" stroke="#777"><circle cx="10.500" cy="10.500" r="9.500" strokeWidth="1.300" /><path d="M10.500 6V15M6 10.500H15" strokeWidth="2" /></svg>
      </button>
      <div className="mt-2 mr-4 ml-auto"><Dots /></div>
      <div className="mt-[5px] mr-[25px] flex h-[19px] w-[585px] bg-[#dadada]">
        <button type="button" aria-label="向左滚动" className={`${box} w-[19px]`}><Arrow d="M7 1V9L3 5Z" /></button>
        <div className={`${box} w-[468px]`} />
        <div className="flex-1" />
        <button type="button" aria-label="向右滚动" className={`${box} w-[19px]`}><Arrow d="M3 1V9L7 5Z" /></button>
      </div>
    </div>
  );
}

function FormatPane() {
  const options = [["无线条", "N"], ["实线", "S"], ["渐变线", "G"]];
  return (
    <aside className="mt-[2px] w-[356px] shrink-0 border-l border-[#c6c6c6] pr-[15px] pl-[14px] text-[15px]">
      <div className="flex h-[53px] items-center">
        <h2 className="flex-1 text-[27px] leading-[53px] text-[#185c37]">设置形状格式</h2>
        <button type="button" aria-label="窗格选项"><svg className="mb-1 h-[6px] w-3" viewBox="0 0 12 6"><path d="M0 0H12L6 6Z" fill="#666" /></svg></button>
        <button type="button" aria-label="关闭窗格" className="mr-[7px] mb-1 ml-10"><svg className="h-3 w-3" viewBox="0 0 12 12" stroke="#666" strokeWidth="1.600"><path d="M0 0L12 12M12 0L0 12" /></svg></button>
      </div>
      <div className="flex h-[42px] items-center gap-[17px] pl-[2px]">
        <button type="button" aria-label="填充与线条" className="flex h-[38px] w-[38px] items-center justify-center bg-[#adadad]">
          <svg className="h-7 w-7" viewBox="0 0 28 28" fill="none" stroke="#217346" strokeWidth="1.300">
            <path d="M17 8C24 9 28 15 23 26C22 19 21 15 17 13Z" fill="#217346" stroke="none" />
            <path d="M12 5L22 15L11.500 25.500L1.500 15.500Z" fill="#fff" />
            <path d="M9 9V3C9 .5 13 .5 13 3V11" />
            <circle cx="13" cy="12" r="1.500" fill="#217346" />
          </svg>
        </button>
        <button type="button" aria-label="效果">
          <svg className="h-[30px] w-6" viewBox="0 0 24 30" fill="#fff" stroke="#777" strokeWidth="1.300"><path d="M12 2L23 10L19 23H5L1 10Z" /><path d="M5 25H19L21 29H3Z" stroke="none" opacity=".7" /></svg>
        </button>
        <button type="button" aria-label="大小与属性" className="ml-[5px]">
          <svg className="h-7 w-7" viewBox="0 0 28 28" fill="none" stroke="#666" strokeWidth="1.300">
            <path d="M9 3.500H26M9 1V6M26 1V6M3.500 9V27M1 9.500H6M1 26.500H6" />
            <rect x="8" y="8" width="19" height="19" rx="2" fill="#6b6b6b" stroke="none" />
            <path d="M17.500 10V25M10 17.500H25M15.500 12L17.500 10L19.500 12M15.500 23L17.500 25L19.500 23M12 15.500L10 17.500L12 19.500M23 15.500L25 17.500L23 19.500" stroke="#fff" />
          </svg>
        </button>
      </div>
      <div className="flex h-4 items-end">
        <div className="w-3 border-b border-[#c3c3c3]" />
        <svg className="h-[11px] w-4" viewBox="0 0 16 11" fill="none" stroke="#c3c3c3"><path d="M0 10.500L8 1L16 10.500" /></svg>
        <div className="flex-1 border-b border-[#c3c3c3]" />
      </div>
      <button type="button" className="mt-px flex h-[31px] items-center gap-[10px] pl-[11px] font-bold text-[#444]">
        <svg className="h-3 w-[7px]" viewBox="0 0 7 12" fill="#fff" stroke="#777"><path d="M.5 1L6 6L.5 11Z" /></svg>
        填充
      </button>
      <button type="button" className="flex h-[31px] items-center gap-[9px] pl-[9px] font-bold text-[#217346]">
        <svg className="h-[10px] w-[10px]" viewBox="0 0 10 10"><path d="M10 0V10H0Z" fill="#444" /></svg>
        线条
      </button>
      <fieldset className="mt-[5px] pl-[29px] text-[#9b9b9b]">
        {options.map(([name, key]) => (
          <label key={key} className="flex h-[30px] items-center gap-[7px]">
            <input type="radio" name="line" disabled className="h-[14px] w-[14px] appearance-none rounded-full bg-white" />
            <span>{name}(<u>{key}</u>)</span>
          </label>
        ))}
      </fieldset>
    </aside>
  );
}

function StatusBar() {
  return (
    <footer className="flex h-[28px] shrink-0 items-center border-t border-b-2 border-t-[#c6c6c6] border-b-[#444] bg-[#f3f2f1] text-[15px] text-[#444]">
      <span className="flex-1 pl-[10px]">就绪</span>
      <button type="button" aria-label="普通" className="flex h-full w-[50px] items-center justify-center bg-[#cecdcc]">
        <svg className="h-4 w-[17px]" viewBox="0 0 17 16" fill="none" stroke="#444" strokeWidth="1.200"><path d="M.5 .5H16.500V15.500H.5ZM6 0V16M11 0V16M0 5.500H17M0 10.500H17" /></svg>
      </button>
      <button type="button" aria-label="页面布局视图" className="flex w-[50px] justify-center">
        <svg className="h-4 w-[17px]" viewBox="0 0 17 16" fill="none" stroke="#444" strokeWidth="1.300"><path d="M.5 .5H16.500V15.500H.5ZM4.500 3.500H12.500V12.500H4.500ZM6 6H11M6 8H11M6 10H11" /></svg>
      </button>
      <button type="button" aria-label="分页预览" className="flex w-[50px] justify-center">
        <svg className="h-4 w-[17px]" viewBox="0 0 17 16" fill="none" stroke="#444" strokeWidth="1.300"><path d="M.5 .5H16.500V15.500H.5ZM6 0V9.500M11 0V9.500M0 9.500H11" /></svg>
      </button>
      <button type="button" aria-label="缩小" className="ml-[7px]"><svg className="h-3 w-[10px]" viewBox="0 0 10 12" stroke="#444" strokeWidth="1.400"><path d="M0 6H10" /></svg></button>
      <input type="range" aria-label="显示比例" defaultValue="50" className="mx-[7px] h-4 w-[125px] appearance-none bg-[linear-gradient(#aaa,#aaa)] bg-[length:100%_1px] bg-center bg-no-repeat [&::-webkit-slider-thumb]:h-[14px] [&::-webkit-slider-thumb]:w-[6px] [&::-webkit-slider-thumb]:appearance-none [&::-webkit-slider-thumb]:bg-[#6f6f6f]" />
      <button type="button" aria-label="放大"><svg className="h-3 w-[10px]" viewBox="0 0 10 12" stroke="#444" strokeWidth="1.400"><path d="M0 6H10M5 1V11" /></svg></button>
      <span className="w-[65px] pl-4">100%</span>
    </footer>
  );
}

export default function App() {
  return (
    <div className={`flex h-screen flex-col overflow-hidden bg-[#f3f2f1] ${UI}`}>
      <TitleBar />
      <TabRow />
      <Ribbon />
      <FormulaBar />
      <main className="flex min-h-0 flex-1 bg-[#e6e6e6]">
        <div className="flex min-w-0 flex-1 flex-col">
          <div className="flex min-h-0 flex-1 pr-[3px]">
            <Sheet />
            <VScroll />
          </div>
          <SheetTabs />
        </div>
        <FormatPane />
      </main>
      <StatusBar />
    </div>
  );
}
